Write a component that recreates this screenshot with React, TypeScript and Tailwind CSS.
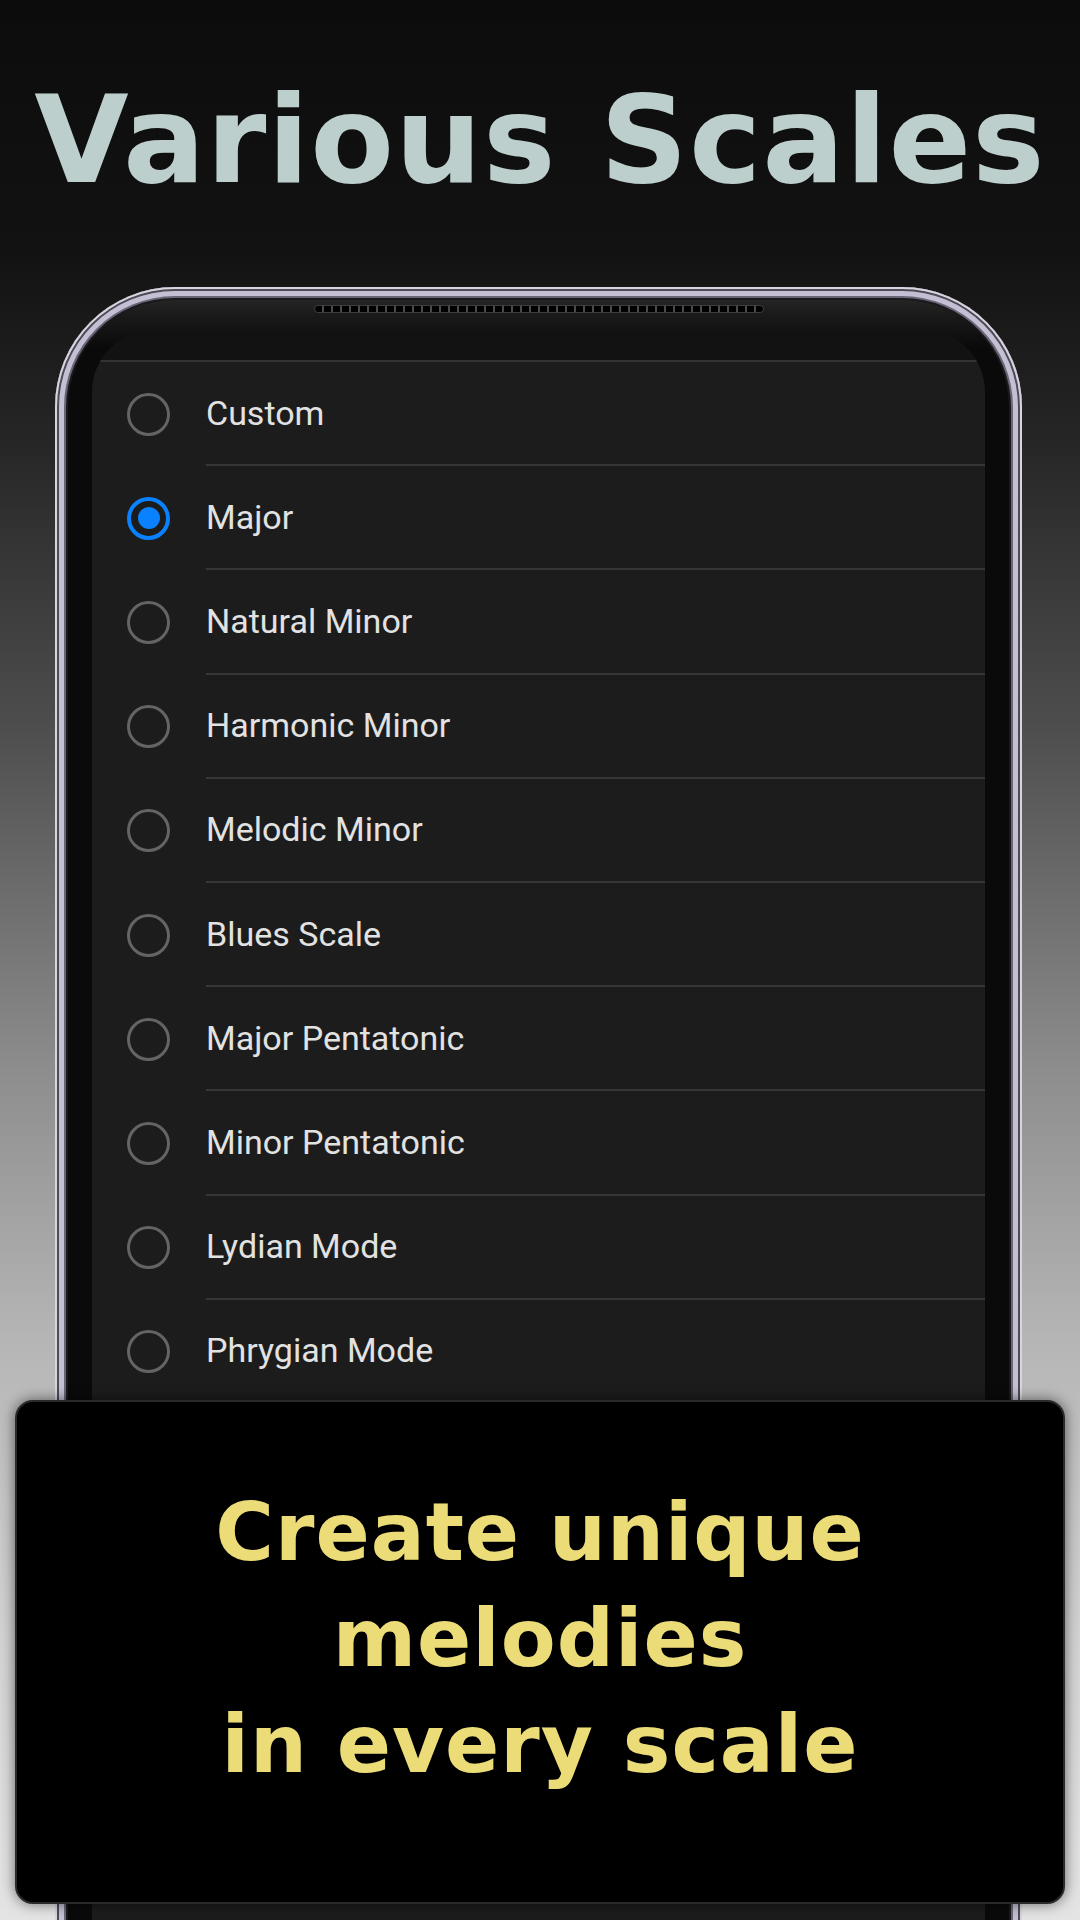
const scales = [
  "Custom",
  "Major",
  "Natural Minor",
  "Harmonic Minor",
  "Melodic Minor",
  "Blues Scale",
  "Major Pentatonic",
  "Minor Pentatonic",
  "Lydian Mode",
  "Phrygian Mode",
];

const caption = ["Create unique", "melodies", "in every scale"];

function Radio({ checked }: { checked: boolean }) {
  if (checked) {
    return (
      <div className="w-[43px] h-[43px] shrink-0 rounded-full border-[4px] border-[#0a82ff] flex items-center justify-center">
        <div className="w-[22px] h-[22px] rounded-full bg-[#0a82ff]" />
      </div>
    );
  }
  return <div className="w-[43px] h-[43px] shrink-0 rounded-full border-[3px] border-[#646464]" />;
}

export default function App() {
  const selected = "Major";

  return (
    <div className="relative w-[1080px] h-[1920px] overflow-hidden bg-[linear-gradient(to_bottom,#0c0c0c_0%,#121212_13%,#262626_23%,#4e4e4e_38%,#8e8e8e_56%,#b6b6b6_70%,#d2d2d2_85%,#e4e4e4_100%)]">
      {/* Title */}
      <h1
        className="pt-[79px] text-center text-[122px] leading-none font-bold tracking-[1px] text-[#bdcfcc]"
        style={{ fontFamily: '"DejaVu Sans", sans-serif' }}
      >
        Various Scales
      </h1>

      {/* Phone */}
      <div className="mt-[86px] ml-[55px] w-[967px] h-[1700px] rounded-t-[120px] bg-[linear-gradient(to_bottom,#2e2e30_0px,#1a1a1a_28px,#0a0a0a_60px)] shadow-[inset_0_0_0_2px_#d8d5e0,inset_0_0_0_4px_#4e4b57,inset_0_0_0_9px_#c4bfd2,inset_0_0_0_11px_#6a6678,inset_0_0_0_13px_#1a1a1c] px-[37px]">
        <div className="pt-[18px] pb-[17px] flex justify-center">
          <div className="w-[450px] h-[8px] rounded-full border border-[#3c3c3c] bg-[repeating-linear-gradient(90deg,#000_0px,#000_7px,#4a4a4a_7px,#4a4a4a_9px)]" />
        </div>

        {/* Screen */}
        <div className="h-[1600px] rounded-t-[62px] overflow-hidden bg-[#1c1c1c]" style={{ fontFamily: "Roboto, sans-serif" }}>
          <div className="h-[32px] bg-[#121212] border-b-2 border-[#343434]" />
          {scales.map((name) => (
            <div key={name} className="h-[104.2px] flex items-center pl-[35px]">
              <Radio checked={name === selected} />
              <div className="ml-[36px] flex-1 h-full flex items-center border-b-2 border-[#363636] text-[34px] text-[#e2e2e2]">
                {name}
              </div>
            </div>
          ))}
        </div>
      </div>

      {/* Caption banner */}
      <div
        className="absolute left-[15px] right-[15px] top-[1400px] h-[504px] rounded-[18px] bg-black border-2 border-[#2a2a2a] shadow-[0_0_14px_rgba(0,0,0,0.55)] pt-[84px] flex flex-col items-center gap-[13px]"
        style={{ fontFamily: '"DejaVu Sans", sans-serif' }}
      >
        {caption.map((line) => (
          <div key={line} className="text-[80px] leading-[93px] font-bold tracking-[1px] text-[#ecdc78]">
            {line}
          </div>
        ))}
      </div>
    </div>
  );
}
